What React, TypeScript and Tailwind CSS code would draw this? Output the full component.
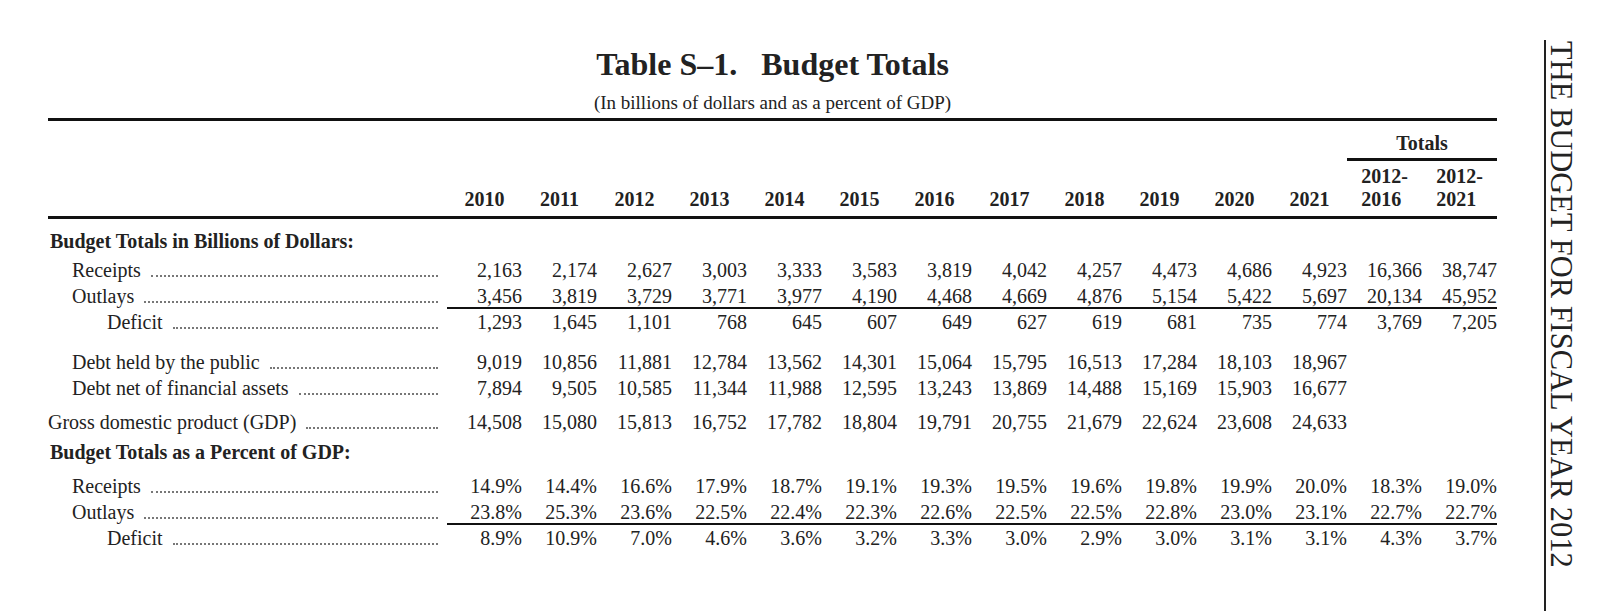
const years = ['2010', '2011', '2012', '2013', '2014', '2015', '2016', '2017', '2018', '2019', '2020', '2021'];

type Line = {
  label: string;
  indent: string;
  values: string[];
  rule?: boolean;
  gap?: string;
};

const dollars: Line[] = [
  {
    label: 'Receipts',
    indent: 'pl-[24px]',
    values: ['2,163', '2,174', '2,627', '3,003', '3,333', '3,583', '3,819', '4,042', '4,257', '4,473', '4,686', '4,923', '16,366', '38,747'],
  },
  {
    label: 'Outlays',
    indent: 'pl-[24px]',
    rule: true,
    values: ['3,456', '3,819', '3,729', '3,771', '3,977', '4,190', '4,468', '4,669', '4,876', '5,154', '5,422', '5,697', '20,134', '45,952'],
  },
  {
    label: 'Deficit',
    indent: 'pl-[59px]',
    values: ['1,293', '1,645', '1,101', '768', '645', '607', '649', '627', '619', '681', '735', '774', '3,769', '7,205'],
  },
  {
    label: 'Debt held by the public',
    indent: 'pl-[24px]',
    gap: 'mt-[14px]',
    values: ['9,019', '10,856', '11,881', '12,784', '13,562', '14,301', '15,064', '15,795', '16,513', '17,284', '18,103', '18,967', '', ''],
  },
  {
    label: 'Debt net of financial assets',
    indent: 'pl-[24px]',
    values: ['7,894', '9,505', '10,585', '11,344', '11,988', '12,595', '13,243', '13,869', '14,488', '15,169', '15,903', '16,677', '', ''],
  },
  {
    label: 'Gross domestic product (GDP)',
    indent: 'pl-0',
    gap: 'mt-[8px]',
    values: ['14,508', '15,080', '15,813', '16,752', '17,782', '18,804', '19,791', '20,755', '21,679', '22,624', '23,608', '24,633', '', ''],
  },
];

const percents: Line[] = [
  {
    label: 'Receipts',
    indent: 'pl-[24px]',
    values: ['14.9%', '14.4%', '16.6%', '17.9%', '18.7%', '19.1%', '19.3%', '19.5%', '19.6%', '19.8%', '19.9%', '20.0%', '18.3%', '19.0%'],
  },
  {
    label: 'Outlays',
    indent: 'pl-[24px]',
    rule: true,
    values: ['23.8%', '25.3%', '23.6%', '22.5%', '22.4%', '22.3%', '22.6%', '22.5%', '22.5%', '22.8%', '23.0%', '23.1%', '22.7%', '22.7%'],
  },
  {
    label: 'Deficit',
    indent: 'pl-[59px]',
    values: ['8.9%', '10.9%', '7.0%', '4.6%', '3.6%', '3.2%', '3.3%', '3.0%', '2.9%', '3.0%', '3.1%', '3.1%', '4.3%', '3.7%'],
  },
];

function TableRow({ line }: { line: Line }): JSX.Element {
  return (
    <div className={`grid h-[26px] grid-cols-[399px_repeat(14,75px)] leading-[26px] ${line.gap ?? ''}`}>
      <div className={`flex h-[26px] pr-[9px] ${line.indent}`}>
        <span className="whitespace-nowrap">{line.label}</span>
        {/* dot leader */}
        <span className="mb-[6px] ml-[10px] min-w-0 flex-1 self-end border-b-2 border-dotted border-[#777]" />
      </div>
      {line.values.map((v, i) => (
        <div
          key={i}
          className={`h-[26px] text-right ${line.rule ? 'border-b-2 border-[#111]' : ''}`}
        >
          {v}
        </div>
      ))}
    </div>
  );
}

export default function App(): JSX.Element {
  return (
    <div className="flex h-[611px] w-[1600px] overflow-hidden bg-white font-['Liberation_Serif',serif] text-[20px] text-[#222]">
      <div className="ml-[48px] w-[1449px] flex-none">
        <div className="flex justify-center gap-[24px] pt-[48px] text-[32px] leading-[32px] font-bold">
          <span>Table S–1.</span>
          <span>Budget Totals</span>
        </div>
        <div className="mt-[13px] text-center text-[19px] leading-[19px]">
          (In billions of dollars and as a percent of GDP)
        </div>

        <div className="mt-[6px] border-y-[3px] border-[#111] pt-[11px] pb-[5px]">
          <div className="grid grid-cols-[399px_repeat(14,75px)] leading-[23px] font-bold">
            <div className="col-span-2 col-start-14 border-b-[3px] border-[#111] pb-[3px] text-center">Totals</div>
            <div className="col-start-1" />
            {years.map((y) => (
              <div key={y} className="flex items-end justify-center pt-[4px]">
                {y}
              </div>
            ))}
            <div className="flex justify-center pt-[4px]">
              <div className="text-left">
                <div>2012-</div>
                <div>2016</div>
              </div>
            </div>
            <div className="flex justify-center pt-[4px]">
              <div className="text-left">
                <div>2012-</div>
                <div>2021</div>
              </div>
            </div>
          </div>
        </div>

        <div className="mt-[9px] h-[29px] pl-[2px] leading-[26px] font-bold">Budget Totals in Billions of Dollars:</div>
        {dollars.map((line) => (
          <TableRow key={line.label} line={line} />
        ))}
        <div className="mt-[4px] h-[34px] pl-[2px] leading-[26px] font-bold">Budget Totals as a Percent of GDP:</div>
        {percents.map((line) => (
          <TableRow key={line.label} line={line} />
        ))}
      </div>

      <div className="mt-[40px] ml-[47px] flex-none border-l-2 border-[#222] pt-[1px]">
        <div className="whitespace-nowrap text-[30.5px] leading-[30px] [writing-mode:vertical-rl]">
          THE BUDGET FOR FISCAL YEAR 2012
        </div>
      </div>
    </div>
  );
}
